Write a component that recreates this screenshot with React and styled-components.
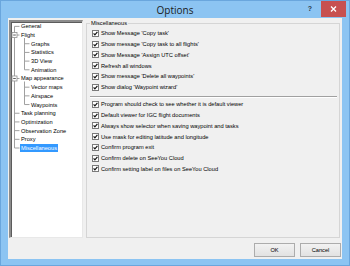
import React from 'react';
import styled, { createGlobalStyle } from 'styled-components';

const ROW = 8.69;
const CHECK_ROW = 10.75;
const TEXT = '5.7px';

const GlobalStyle = createGlobalStyle`
    html, body {
        margin: 0;
        padding: 0;
    }
    body {
        width: 350px;
        height: 266px;
        overflow: hidden;
        background: #ffffff;
    }
`;

const Window = styled.div`
    width: 350px;
    height: 266px;
    box-sizing: border-box;
    background: #8cc4f2;
    border: 1px solid #6aa6dd;
    display: flex;
    flex-direction: column;
    font-family: "Liberation Sans", Arial, sans-serif;
    color: #000;
`;

const TitleBar = styled.div`
    height: 17px;
    display: grid;
    grid-template-columns: 1fr auto 1fr;
    align-items: start;
`;

const Title = styled.div`
    grid-column: 2;
    font-family: "Open Sans", "Noto Sans", sans-serif;
    font-size: 10px;
    line-height: 18px;
    color: #1b1b1b;
`;

const Controls = styled.div`
    grid-column: 3;
    display: flex;
    justify-content: flex-end;
    align-items: flex-start;
    padding-right: 3px;
`;

const HelpButton = styled.div`
    width: 12px;
    height: 16px;
    margin-right: 5px;
    font-family: "Liberation Sans", Arial, sans-serif;
    font-weight: bold;
    font-size: 7px;
    line-height: 16px;
    text-align: center;
    color: #2b3a4a;
`;

const CloseButton = styled.div`
    width: 25px;
    height: 16px;
    background: #c75050;
    display: flex;
    align-items: center;
    justify-content: center;
`;

const Client = styled.div`
    flex: 1;
    margin: 0 7px 6px 7px;
    background: #f0f0f0;
    display: flex;
    flex-direction: column;
    padding: 2px 1px 2px 1px;
    box-sizing: border-box;
`;

const Body = styled.div`
    height: 218px;
    display: flex;
    gap: 3px;
`;

const TreePanel = styled.div`
    position: relative;
    width: 74px;
    box-sizing: border-box;
    background: #ffffff;
    border-style: solid;
    border-width: 2px 1px 1px 2px;
    border-color: #8c8c8c #e8e8e8 #e8e8e8 #8c8c8c;
    box-shadow: inset 1px 1px 0 #5c5c5c;
`;

const TreeLines = styled.svg`
    position: absolute;
    left: 0;
    top: 0;
    pointer-events: none;
`;

const TreeRow = styled.div`
    height: ${ROW}px;
    display: flex;
    align-items: center;
    padding-left: ${p => (p.$level === 1 ? 20 : 10)}px;
    font-size: ${TEXT};
    line-height: ${ROW}px;
    white-space: nowrap;
`;

const TreeLabel = styled.span`
    margin-left: -1px;
    padding: 0 1px;
    line-height: 8px;
    background: ${p => (p.$selected ? '#3399ff' : 'transparent')};
    color: ${p => (p.$selected ? '#ffffff' : '#000000')};
`;

const GroupBox = styled.div`
    flex: 1;
    margin: 3px 1px 0 0;
    border: 1px solid #d5d5d5;
    display: flex;
    flex-direction: column;
`;

const Legend = styled.div`
    align-self: flex-start;
    margin: -4px 0 0 3px;
    padding: 0 1px;
    background: #f0f0f0;
    font-size: ${TEXT};
    line-height: 7px;
`;

const CheckList = styled.div`
    display: flex;
    flex-direction: column;
    padding-top: 1px;
`;

const CheckRow = styled.div`
    height: ${CHECK_ROW}px;
    display: flex;
    align-items: center;
    gap: 2px;
    padding-left: 5px;
    font-size: ${TEXT};
    white-space: nowrap;
`;

const Box = styled.div`
    width: 7px;
    height: 7px;
    box-sizing: border-box;
    border: 1px solid #7a7a7a;
    background: #ffffff;
    display: flex;
`;

const Separator = styled.div`
    height: 0;
    margin: 3px 2px 1.5px 3px;
    border-top: 1px solid #a0a0a0;
    border-bottom: 1px solid #ffffff;
`;

const ButtonRow = styled.div`
    margin-top: 5px;
    height: 14px;
    display: flex;
    justify-content: flex-end;
    gap: 5px;
`;

const Button = styled.div`
    width: 41px;
    height: 14px;
    box-sizing: border-box;
    border: 1px solid #acacac;
    background: linear-gradient(#f2f2f2, #e2e2e2);
    display: flex;
    align-items: center;
    justify-content: center;
    font-size: ${TEXT};
`;

const treeItems = [
    { label: 'General', level: 0 },
    { label: 'Flight', level: 0, open: true },
    { label: 'Graphs', level: 1 },
    { label: 'Statistics', level: 1 },
    { label: '3D View', level: 1 },
    { label: 'Animation', level: 1 },
    { label: 'Map appearance', level: 0, open: true },
    { label: 'Vector maps', level: 1 },
    { label: 'Airspace', level: 1 },
    { label: 'Waypoints', level: 1 },
    { label: 'Task planning', level: 0 },
    { label: 'Optimization', level: 0 },
    { label: 'Observation Zone', level: 0 },
    { label: 'Proxy', level: 0 },
    { label: 'Miscellaneous', level: 0, selected: true },
];

const firstGroup = [
    "Show Message 'Copy task'",
    "Show message 'Copy task to all flights'",
    "Show Message 'Assign UTC offset'",
    'Refresh all windows',
    "Show message 'Delete all waypoints'",
    "Show dialog 'Waypoint wizard'",
];

const secondGroup = [
    'Program should check to see whether it is default viewer',
    'Default viewer for IGC flight documents',
    'Always show selector when saving waypoint and tasks',
    'Use mask for editing latitude and longitude',
    'Confirm program exit',
    'Confirm delete on SeeYou Cloud',
    'Confirm setting label on files on SeeYou Cloud',
];

const cy = (i) => (i + 0.5) * ROW;

const Connectors = () => {
    const stroke = '#a0a0a0';
    const rootX = 3.5;
    const childX = 13.5;
    const last = treeItems.length - 1;
    const parts = [];
    parts.push(<line key="root" x1={rootX} y1={cy(0)} x2={rootX} y2={cy(last)} stroke={stroke} strokeWidth="1" />);
    treeItems.forEach((item, i) => {
        if (item.level === 0) {
            parts.push(<line key={`h${i}`} x1={rootX} y1={cy(i)} x2={8.5} y2={cy(i)} stroke={stroke} strokeWidth="1" />);
        } else {
            parts.push(<line key={`h${i}`} x1={childX} y1={cy(i)} x2={18.5} y2={cy(i)} stroke={stroke} strokeWidth="1" />);
        }
    });
    // child branches
    [[1, 5], [6, 9]].forEach(([parent, end]) => {
        parts.push(<line key={`v${parent}`} x1={childX} y1={cy(parent) + 3} x2={childX} y2={cy(end)} stroke={stroke} strokeWidth="1" />);
    });
    // expander boxes
    treeItems.forEach((item, i) => {
        if (item.open) {
            const y = cy(i);
            parts.push(
                <g key={`b${i}`}>
                    <rect x={1} y={y - 2.5} width={5} height={5} fill="#ffffff" stroke="#8f8f8f" strokeWidth="0.8" />
                    <line x1={2.2} y1={y} x2={4.8} y2={y} stroke="#333" strokeWidth="0.8" />
                </g>
            );
        }
    });
    return (
        <TreeLines width="71" height="215" viewBox="0 0 71 215">
            {parts}
        </TreeLines>
    );
};

const Check = () => (
    <Box>
        <svg width="5" height="5" viewBox="0 0 5 5">
            <path d="M0.6 2.3 L1.9 3.8 L4.4 0.9" fill="none" stroke="#111" strokeWidth="1.2" />
        </svg>
    </Box>
);

const App = () => {
    return (
        <>
            <GlobalStyle />
            <Window>
                <TitleBar>
                    <Title>Options</Title>
                    <Controls>
                        <HelpButton>?</HelpButton>
                        <CloseButton>
                            <svg width="7" height="6" viewBox="0 0 7 6">
                                <path d="M1 0.5 L6 5.5 M6 0.5 L1 5.5" stroke="#ffffff" strokeWidth="1.3" />
                            </svg>
                        </CloseButton>
                    </Controls>
                </TitleBar>
                <Client>
                    <Body>
                        <TreePanel>
                            <Connectors />
                            {treeItems.map(item => (
                                <TreeRow key={item.label} $level={item.level}>
                                    <TreeLabel $selected={item.selected}>{item.label}</TreeLabel>
                                </TreeRow>
                            ))}
                        </TreePanel>
                        <GroupBox>
                            <Legend>Miscellaneous</Legend>
                            <CheckList>
                                {firstGroup.map(text => (
                                    <CheckRow key={text}><Check />{text}</CheckRow>
                                ))}
                                <Separator />
                                {secondGroup.map(text => (
                                    <CheckRow key={text}><Check />{text}</CheckRow>
                                ))}
                            </CheckList>
                        </GroupBox>
                    </Body>
                    <ButtonRow>
                        <Button>OK</Button>
                        <Button>Cancel</Button>
                    </ButtonRow>
                </Client>
            </Window>
        </>
    );
};

export default App;
